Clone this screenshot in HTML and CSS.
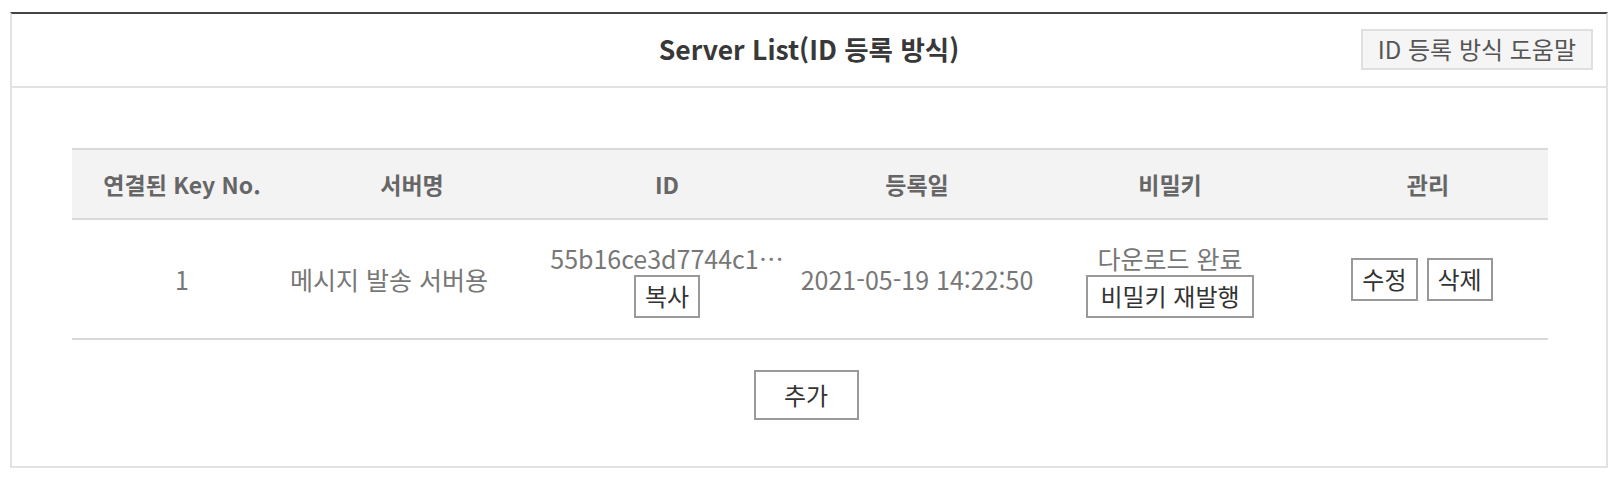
FILE: index.html
```html
<!DOCTYPE html>
<html lang="ko">
<head>
<meta charset="utf-8">
<title>Server List</title>
<link rel="stylesheet" href="styles.css">
</head>
<body>
<section class="panel">
  <header class="panel-head">
    <span class="head-spacer"></span>
    <h2 class="panel-title">Server List(ID 등록 방식)</h2>
    <button class="help-btn" type="button">ID 등록 방식 도움말</button>
  </header>
  <div class="panel-body">
    <table class="server-table">
      <colgroup>
        <col class="col-key">
        <col class="col-name">
        <col class="col-id">
        <col class="col-date">
        <col class="col-secret">
        <col class="col-manage">
      </colgroup>
      <thead>
        <tr>
          <th>연결된 Key No.</th>
          <th>서버명</th>
          <th>ID</th>
          <th>등록일</th>
          <th>비밀키</th>
          <th>관리</th>
        </tr>
      </thead>
      <tbody>
        <tr>
          <td>1</td>
          <td class="cell-name"><span class="fit">메시지 발송 서버용</span></td>
          <td>
            <div class="cell-text">55b16ce3d7744c1…</div>
            <button class="btn" type="button">복사</button>
          </td>
          <td><span class="fit">2021-05-19 14:22:50</span></td>
          <td>
            <div class="cell-text">다운로드 완료</div>
            <button class="btn btn-wide" type="button">비밀키 재발행</button>
          </td>
          <td class="cell-manage">
            <div class="btn-group">
              <button class="btn" type="button">수정</button>
              <button class="btn" type="button">삭제</button>
            </div>
          </td>
        </tr>
      </tbody>
    </table>
    <div class="actions">
      <button class="btn btn-add" type="button">추가</button>
    </div>
  </div>
</section>
</body>
</html>
```

FILE: styles.css
```css
* {
  box-sizing: border-box;
}

body {
  margin: 12px 10px 10px;
  background: #ffffff;
  font-family: "Noto Sans CJK KR", "Noto Sans", sans-serif;
  color: #777777;
}

.panel {
  border: 2px solid #e2e2e2;
  border-top: 2px solid #444444;
  background: #ffffff;
}

.panel-head {
  height: 74px;
  border-bottom: 2px solid #e2e2e2;
  display: grid;
  grid-template-columns: 1fr auto 1fr;
  align-items: center;
  padding: 0 13px 2px 13px;
}

.panel-title {
  margin: 0;
  font-size: 26.5px;
  font-weight: 700;
  color: #383838;
  line-height: 1;
}

.help-btn {
  justify-self: end;
  height: 41px;
  padding: 0 15px;
  border: 2px solid #e0e0e0;
  background: #f5f5f5;
  color: #555555;
  font-family: inherit;
  font-size: 24px;
  line-height: 1;
}

.panel-body {
  padding: 60px 58px 46px 60px;
}

.server-table {
  width: 100%;
  table-layout: fixed;
  border-collapse: separate;
  border-spacing: 0;
}

.col-key { width: 220px; }
.col-name { width: 240px; }
.col-id { width: 270px; }
.col-date { width: 230px; }
.col-secret { width: 276px; }
.col-manage { width: 240px; }

.server-table th {
  height: 72px;
  background: #f3f3f3;
  border-top: 2px solid #d9d9d9;
  border-bottom: 2px solid #d9d9d9;
  font-size: 23px;
  font-weight: 700;
  color: #666666;
  text-align: center;
  padding: 0;
}

.server-table td {
  height: 120px;
  border-bottom: 2px solid #d9d9d9;
  font-size: 25px;
  color: #777777;
  text-align: center;
  vertical-align: middle;
  padding: 0;
  white-space: nowrap;
}

.server-table td.cell-name {
  padding-right: 46px;
}

.server-table td.cell-manage {
  padding-right: 12px;
}

.fit {
  display: inline-block;
  margin: 0 -40px;
}

.cell-text {
  line-height: 34px;
  white-space: nowrap;
}

.btn {
  height: 43px;
  padding: 0 9px;
  border: 2px solid #999999;
  background: #ffffff;
  color: #333333;
  font-family: inherit;
  font-size: 24px;
  line-height: 1;
}

.btn-wide {
  padding: 0 12px;
}

.btn-group {
  display: flex;
  justify-content: center;
  gap: 9px;
}

.actions {
  display: flex;
  justify-content: center;
  margin-top: 30px;
  padding-right: 8px;
}

.btn-add {
  width: 105px;
  height: 50px;
}
```
